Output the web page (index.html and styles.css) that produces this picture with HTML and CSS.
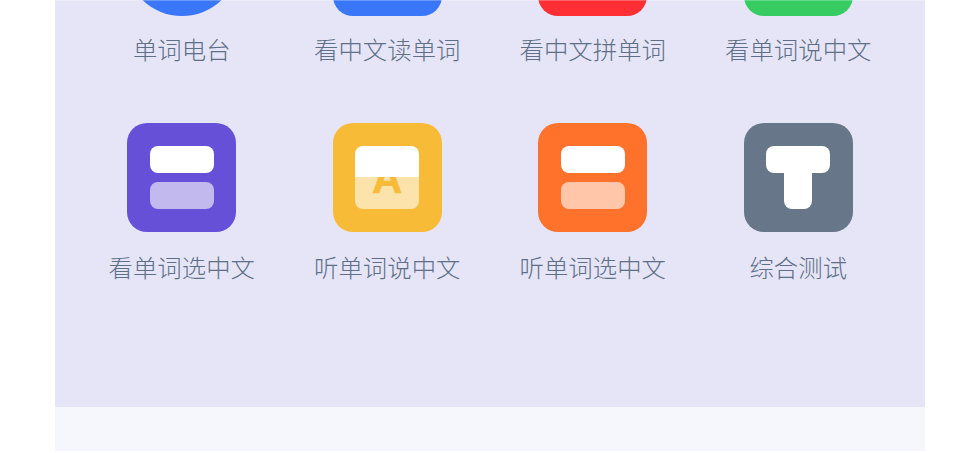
FILE: index.html
```html
<!DOCTYPE html>
<html lang="zh-CN">
<head>
<meta charset="utf-8">
<title>单词练习</title>
<link rel="stylesheet" href="styles.css">
</head>
<body>
<div class="page">
  <main class="panel">
    <div class="grid">
      <div class="item"><div class="icon tall round blue"></div><p class="label">单词电台</p></div>
      <div class="item"><div class="icon tall blue"></div><p class="label">看中文读单词</p></div>
      <div class="item"><div class="icon tall red"></div><p class="label">看中文拼单词</p></div>
      <div class="item"><div class="icon tall green"></div><p class="label">看单词说中文</p></div>

      <div class="item">
        <div class="icon purple"><div class="bars"><span class="bar"></span><span class="bar faded"></span></div></div>
        <p class="label">看单词选中文</p>
      </div>
      <div class="item">
        <div class="icon yellow">
          <div class="card"><div class="card-top"></div><div class="card-bottom"><span class="letter">A</span></div></div>
        </div>
        <p class="label">听单词说中文</p>
      </div>
      <div class="item">
        <div class="icon orange"><div class="bars"><span class="bar"></span><span class="bar faded"></span></div></div>
        <p class="label">听单词选中文</p>
      </div>
      <div class="item">
        <div class="icon slate"><div class="tee"><span class="tee-bar"></span><span class="tee-stem"></span></div></div>
        <p class="label">综合测试</p>
      </div>
    </div>
  </main>
  <footer class="foot"></footer>
</div>
</body>
</html>
```
FILE: styles.css
```css
* { box-sizing: border-box; }
html, body { margin: 0; height: 453px; overflow: hidden; background: #fff; }
body { font-family: "Noto Sans CJK SC", "Noto Sans", sans-serif; }

.page { width: 870px; margin: 0 auto; }

.panel {
  position: relative;
  height: 407px;
  padding: 0 24px;
  background: #e6e5f7;
  overflow: hidden;
}
.panel::after {
  content: "";
  position: absolute;
  top: 0;
  left: 0;
  right: 0;
  height: 1px;
  background: rgba(255, 255, 255, .25);
}

.grid {
  display: grid;
  grid-template-columns: repeat(4, 1fr);
  grid-auto-rows: 218px;
  margin-top: -95px;
}

.item { display: flex; flex-direction: column; align-items: center; }

.icon {
  width: 109px;
  height: 109px;
  border-radius: 20px;
  display: flex;
  align-items: center;
  justify-content: center;
  flex: none;
}
.tall { height: 111px; margin-bottom: -2px; }
.round { width: 114px; height: 114px; margin-top: -3px; border-radius: 50%; }
.blue { background: #3a77f8; }
.red { background: #ff2f33; }
.green { background: #36cc62; }
.purple { background: #6750d8; }
.yellow { background: #f8bb38; }
.orange { background: #ff722b; }
.slate { background: #687689; }

.label {
  margin: 18px 0 0;
  font-size: 24.4px;
  line-height: 34px;
  font-weight: 300;
  color: #5d7087;
  white-space: nowrap;
}

.bars { width: 64px; display: flex; flex-direction: column; gap: 9px; }
.bar { display: block; height: 27px; border-radius: 8px; background: #fff; }
.faded { opacity: .6; }

.card {
  position: relative;
  width: 64px;
  height: 63px;
  border-radius: 8px;
  overflow: hidden;
  display: flex;
  flex-direction: column;
}
.card-top { height: 31px; background: #fff; flex: none; }
.card-bottom { flex: 1; background: #fce2ab; position: relative; overflow: hidden; }
.letter {
  position: absolute;
  left: 0;
  right: 0;
  bottom: 15px;
  text-align: center;
  font: 700 42px/30px "Liberation Sans", sans-serif;
  color: #f8bb38;
  -webkit-text-stroke: .6px #f8bb38;
}

.tee { width: 64px; display: flex; flex-direction: column; align-items: center; }
.tee-bar { display: block; width: 64px; height: 27px; border-radius: 8px; background: #fff; }
.tee-stem { display: block; width: 28px; height: 46px; margin-top: -10px; border-radius: 8px; background: #fff; }

.foot { height: 44px; background: #f6f7fc; }
```
